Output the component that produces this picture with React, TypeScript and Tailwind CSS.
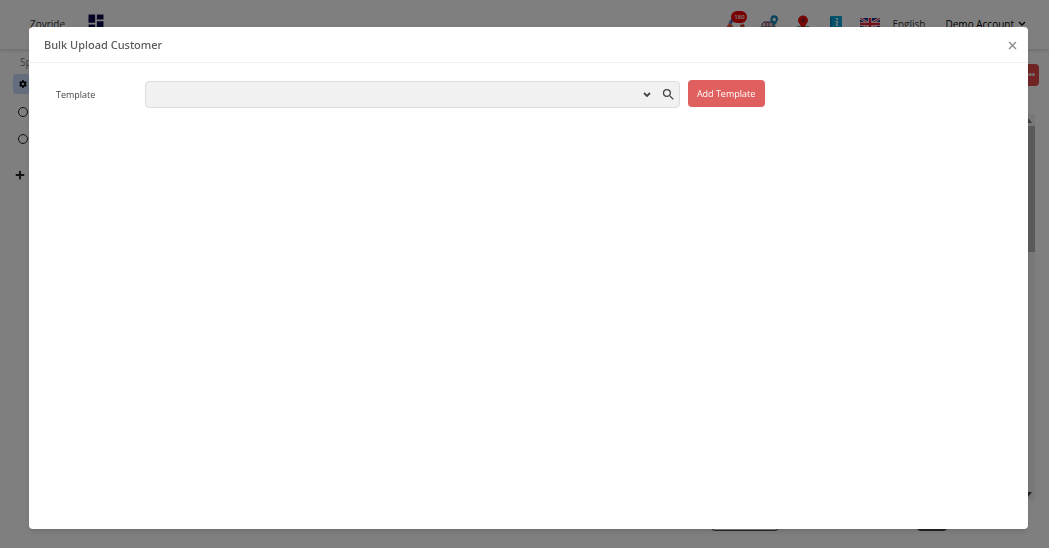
import { useState } from "react";
import { FaCog, FaPlus } from "react-icons/fa";
import { MdDashboard, MdSearch } from "react-icons/md";

const filters = ["Active", "Inactive"];

function SupportIcon() {
  return (
    <svg viewBox="0 0 18 18" className="size-[18px]">
      <circle cx="9" cy="11" r="6.500" fill="none" stroke="#dfe6f2" strokeWidth="4" />
      <path d="M3 9a7 7 0 0 1 6-5h4" fill="none" stroke="#4a78c4" strokeWidth="3" />
      <path d="M0 11l3-3 3 3-3 5-3-1z" fill="#e8502e" />
      <path d="M13 10l4-1 1 5-4 1z" fill="#d8402e" />
    </svg>
  );
}

function BasketIcon() {
  return (
    <svg viewBox="0 0 18 18" className="size-[18px]">
      <path d="M3 7h10l3 2H1z" fill="#e0707a" />
      <path d="M1 8h14l-1 9H3z" fill="#f2c8b0" />
      <path
        d="M1 12V9l2-2h8M0 12h15M5 8v9M8 8v9M12 9v8"
        stroke="#3a4f8c"
        strokeWidth="1"
        fill="none"
      />
      <path d="M1 14h14" stroke="#d8404a" strokeWidth="1.500" />
      <path d="M13 11C10 7 9 5 9.500 3.500a3.800 3.800 0 0 1 7.500 0C17.500 5 16 7 13 11z" fill="#1687b5" />
      <circle cx="13.200" cy="4.500" r="1.700" fill="#fff" />
    </svg>
  );
}

function PinIcon() {
  return (
    <svg viewBox="0 0 18 18" className="size-[18px]">
      <path d="M3 11h12l3 6H0z" fill="#55a868" />
      <path d="M9 15C7 10 4 8 4 5.500a5 5 0 0 1 10 0C14 8 11 10 9 15z" fill="#e81010" />
      <circle cx="9" cy="5.500" r="1.800" fill="#7a2020" />
    </svg>
  );
}

function InfoIcon() {
  return (
    <svg viewBox="0 0 14 16" className="h-4 w-3.5">
      <rect x="1" width="12" height="16" rx="1" fill="#08a4d8" />
      <path d="M1 1h2v15H1z" fill="#078bb8" />
      <circle cx="8" cy="3" r="1.100" fill="#fff" />
      <path d="M6.500 5.500h2L7.500 9.500h1.500" stroke="#fff" strokeWidth="1.200" fill="none" />
    </svg>
  );
}

function FlagIcon() {
  return (
    <svg viewBox="0 0 20 12" className="h-3 w-5">
      <rect width="20" height="12" fill="#1c2f8c" />
      <path d="M0 0l20 12M20 0L0 12" stroke="#fff" strokeWidth="2.500" />
      <path d="M0 0l20 12M20 0L0 12" stroke="#e0203a" strokeWidth="1" />
      <path d="M10 0v12M0 6h20" stroke="#fff" strokeWidth="4" />
      <path d="M10 0v12M0 6h20" stroke="#e0203a" strokeWidth="2.500" />
    </svg>
  );
}

function Header() {
  return (
    <header className="flex h-[50px] shrink-0 items-center border-b border-gray-200 pr-[23px] pb-px pl-[30px] text-[10px] text-[#333] shadow-sm">
      <span className="w-14">Zoyride</span>
      <MdDashboard className="-mt-1 size-5 text-[#0b0b4f]" />
      <div className="ml-auto flex items-center">
        <div className="relative mr-4">
          <SupportIcon />
          <span className="absolute -top-1 left-1 flex h-3 w-4 items-center justify-center rounded-full bg-[#f00000] text-[6px] font-semibold text-white">
            180
          </span>
        </div>
        <div className="mr-[15px]">
          <BasketIcon />
        </div>
        <div className="mr-[17px]">
          <PinIcon />
        </div>
        <div className="mr-[17px]">
          <InfoIcon />
        </div>
        <FlagIcon />
        <span className="ml-3">English</span>
        <span className="ml-5 text-black">Demo Account</span>
        <svg viewBox="0 0 8 6" className="ml-1 h-1.5 w-2 text-black">
          <path d="M1 1l3 3 3-3" fill="none" stroke="currentColor" strokeWidth="1.300" />
        </svg>
      </div>
    </header>
  );
}

function Sidebar() {
  return (
    <aside className="w-[170px] shrink-0 pt-1 pl-[13px] text-[10px] text-[#777]">
      <p className="pl-[7px] leading-4">Special Filter</p>
      <div className="mt-1 flex h-5 items-center rounded-xs bg-[#cbdcff] pl-1.5">
        <FaCog className="size-2 text-black" />
      </div>
      <div className="mt-1">
        {filters.map((name) => (
          <label key={name} className="flex h-[27px] items-center gap-2 pl-[5px]">
            <input
              type="radio"
              name="filter"
              className="size-2.5 appearance-none rounded-full border border-[#222]"
            />
            {name}
          </label>
        ))}
      </div>
      <button type="button" aria-label="Add filter" className="mt-[18px] block pl-0.5">
        <FaPlus className="size-2.5 text-[#222]" />
      </button>
    </aside>
  );
}

function Content() {
  return (
    <main className="flex min-w-0 flex-1 flex-col pr-2.5">
      <div className="mt-3.5 flex justify-end">
        <button
          type="button"
          className="h-[22px] w-12 rounded-sm bg-[#e04848] pr-1 text-right text-[8px] leading-4 font-bold text-white"
        >
          •••
        </button>
      </div>
      <div className="mt-7 mr-1 flex min-h-0 flex-1 justify-end">
        <div className="flex w-3.5 flex-col items-center bg-[#f1f1f1]">
          <svg viewBox="0 0 8 6" className="my-[3px] h-1.5 w-2">
            <path d="M0 6l4-5 4 5z" fill="#777" />
          </svg>
          <div className="h-[126px] w-full bg-[#b4b4b4]" />
          <svg viewBox="0 0 8 6" className="mt-auto mb-0.5 h-1.5 w-2">
            <path d="M0 0h8L4 5z" fill="#444" />
          </svg>
        </div>
      </div>
      <div className="flex h-[49px] items-start justify-end gap-[138px] pr-[92px]">
        <div className="h-[31px] w-[68px] rounded-sm border border-[#555]" />
        <div className="h-[31px] w-[30px] rounded-sm bg-[#444]" />
      </div>
    </main>
  );
}

function UploadDialog({ onClose }: { onClose: () => void }) {
  const [template, setTemplate] = useState("");

  return (
    <div
      role="dialog"
      aria-modal="true"
      aria-labelledby="upload-title"
      className="flex-1 rounded-sm bg-white shadow-md"
    >
      <div className="flex h-9 items-center justify-between border-b border-[#f0f0f0] pt-0.5 pr-[11px] pl-[15px]">
        <h2
          id="upload-title"
          className="font-['Noto_Sans','Open_Sans',sans-serif] text-[11px] font-medium text-[#5a5a5a]"
        >
          Bulk Upload Customer
        </h2>
        <button type="button" aria-label="Close" onClick={onClose} className="text-[#888]">
          <svg viewBox="0 0 9 9" className="size-[9px]">
            <path d="M1 1l7 7M8 1L1 8" stroke="currentColor" strokeWidth="1.300" />
          </svg>
        </button>
      </div>
      <div className="flex items-start pt-[17px] pl-[27px]">
        <label htmlFor="template" className="mt-[7px] w-[89px] text-[9px] leading-4 text-[#444]">
          Template
        </label>
        <div className="relative mt-px w-[55%]">
          <select
            id="template"
            value={template}
            onChange={(e) => setTemplate(e.target.value)}
            className="block h-[27px] w-full appearance-none rounded-sm border border-[#ddd] bg-[#f1f1f1] px-2 text-[9px] text-[#555]"
          >
            <option value=""></option>
          </select>
          <div className="pointer-events-none absolute inset-y-0 right-1 flex items-center gap-2.5 text-[#444]">
            <svg viewBox="0 0 8 6" className="h-1.5 w-2">
              <path d="M1 1l3 3 3-3" fill="none" stroke="currentColor" strokeWidth="1.800" />
            </svg>
            <MdSearch className="size-[15px]" />
          </div>
        </div>
        <button
          type="button"
          className="ml-2 h-[27px] w-[77px] rounded-sm bg-[#e06060] text-[9px] text-white"
        >
          Add Template
        </button>
      </div>
    </div>
  );
}

export default function App() {
  const [open, setOpen] = useState(true);

  return (
    <div className="h-screen overflow-hidden bg-white font-['Open_Sans','Noto_Sans',sans-serif]">
      <div className="flex h-full flex-col">
        <Header />
        <div className="flex min-h-0 flex-1">
          <Sidebar />
          <Content />
        </div>
      </div>
      {open && (
        <div className="fixed inset-x-0 top-0 bottom-px flex bg-black/50 pt-[27px] pr-[21px] pb-[19px] pl-[29px]">
          <UploadDialog onClose={() => setOpen(false)} />
        </div>
      )}
    </div>
  );
}
